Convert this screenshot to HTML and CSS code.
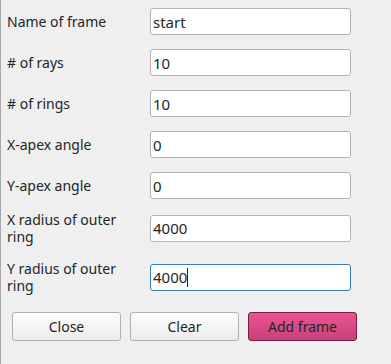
FILE: index.html
```html
<!DOCTYPE html>
<html lang="en">
<head>
    <meta charset="UTF-8">
    <meta name="viewport" content="width=device-width, initial-scale=1.0">
    <title>Add frame</title>
    <link rel="stylesheet" href="styles.css">
</head>
<body>

    <div class="frame-dialog">
        <form id="frame-form">
            <div class="form-row">
                <label for="name">Name of frame</label>
                <input type="text" id="name" name="name" value="start">
            </div>
            <div class="form-row">
                <label for="rays"># of rays</label>
                <input type="text" id="rays" name="rays" value="10">
            </div>
            <div class="form-row">
                <label for="rings"># of rings</label>
                <input type="text" id="rings" name="rings" value="10">
            </div>
            <div class="form-row">
                <label for="xapex">X-apex angle</label>
                <input type="text" id="xapex" name="xapex" value="0">
            </div>
            <div class="form-row">
                <label for="yapex">Y-apex angle</label>
                <input type="text" id="yapex" name="yapex" value="0">
            </div>
            <div class="form-row tall first-tall">
                <label for="xradius">X radius of outer ring</label>
                <input type="text" id="xradius" name="xradius" value="4000">
            </div>
            <div class="form-row tall">
                <label for="yradius">Y radius of outer ring</label>
                <div class="field-wrap">
                    <input type="text" id="yradius" name="yradius" value="4000" class="focused">
                    <span class="caret"></span>
                </div>
            </div>
        </form>
        <div class="button-row">
            <button type="button">Close</button>
            <button type="button">Clear</button>
            <button type="submit" form="frame-form" class="primary">Add frame</button>
        </div>
    </div>

</body>
</html>
```

FILE: styles.css
```css
body {
    font-family: "Noto Sans", sans-serif;
    font-size: 14px;
    color: #232627;
    background-color: #efefef;
    margin: 0;
    padding: 0;
}

.frame-dialog {
    height: 364px;
    box-sizing: border-box;
    border-left: 1px solid #a8a8a8;
    padding-top: 8px;
    padding-left: 6px;
}

.form-row {
    display: flex;
    align-items: center;
    margin-bottom: 14px;
}

.form-row label {
    width: 143px;
    flex-shrink: 0;
    line-height: 17px;
}

.tall label {
    padding-right: 33px;
    box-sizing: border-box;
}

.first-tall {
    margin-top: -2px;
    margin-bottom: 15px;
}

.field-wrap {
    position: relative;
}

input[type="text"] {
    display: block;
    width: 201px;
    height: 27px;
    padding: 0 2px;
    border: 1px solid #b4b4b4;
    border-radius: 3px;
    background-color: #fff;
    box-sizing: border-box;
    font-family: "Noto Sans", sans-serif;
    font-size: 15px;
    color: #232627;
    outline: none;
}

input.focused {
    border-color: #3a7ab3;
}

.caret {
    position: absolute;
    left: 37px;
    top: 4px;
    width: 1px;
    height: 19px;
    background-color: #232627;
}

.button-row {
    display: flex;
    gap: 9px;
    padding-left: 5px;
    margin-top: 18px;
}

button {
    width: 109px;
    height: 29px;
    border: 1px solid #b0b0b0;
    border-radius: 3px;
    background: linear-gradient(#fcfcfc, #ececec);
    font-family: "Noto Sans", sans-serif;
    font-size: 14px;
    color: #232627;
    cursor: pointer;
}

button.primary {
    background: linear-gradient(#ea5391, #c9417b);
    border-color: #7a1d45;
}
```
